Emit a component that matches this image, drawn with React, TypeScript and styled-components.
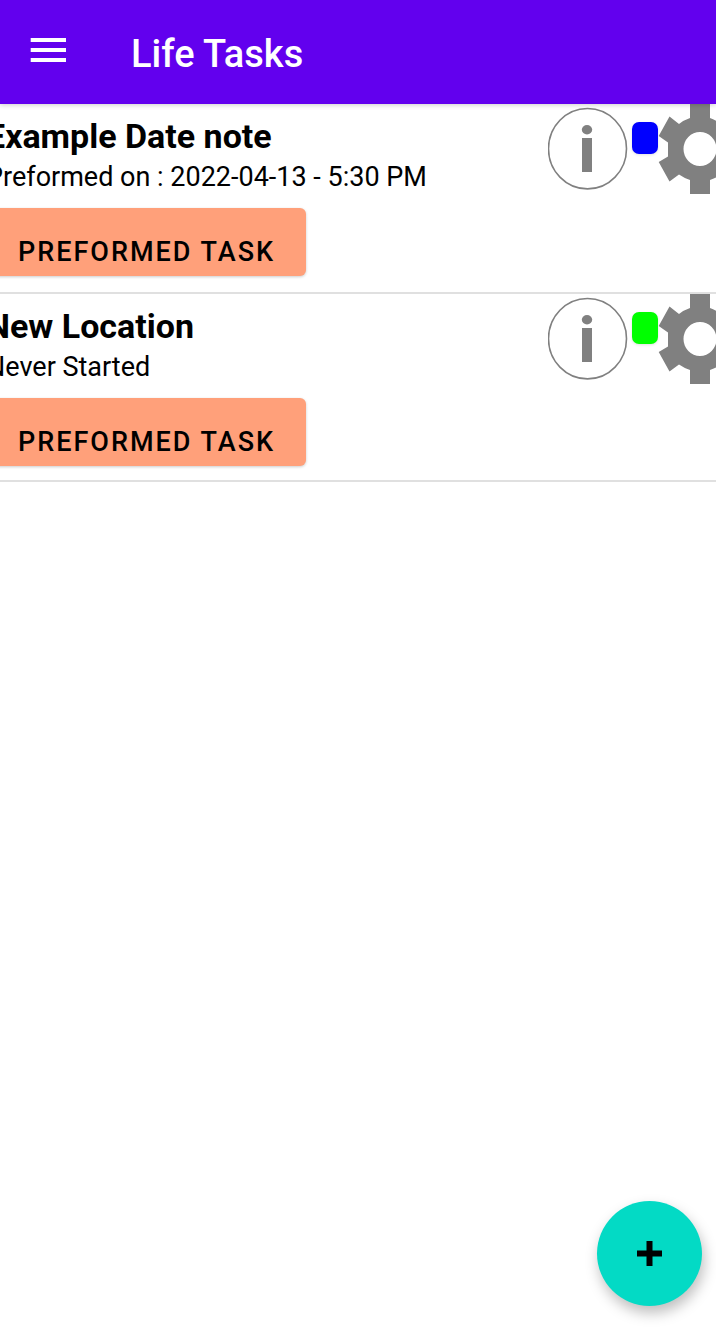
import React from "react";
import styled, { createGlobalStyle } from "styled-components";

const GlobalStyle = createGlobalStyle`
  *, *::before, *::after { box-sizing: border-box; }
  body {
    margin: 0;
    background: #ffffff;
    color: #000000;
    font-family: Roboto, "Liberation Sans", sans-serif;
  }
  button { font-family: inherit; color: inherit; border: 0; padding: 0; cursor: pointer; }
`;

const Screen = styled.div`
  min-height: 100vh;
  overflow: hidden;
`;

const AppBar = styled.header`
  position: relative;
  display: flex;
  align-items: center;
  gap: 64px;
  height: 104px;
  padding: 0 30px;
  background: #6200ee;
  color: #ffffff;
  box-shadow: 0 1px 5px rgba(0, 0, 0, 0.2);
`;

const MenuButton = styled.button`
  display: flex;
  width: 37px;
  height: 48px;
  align-items: center;
  padding-bottom: 4px;
  background: none;
`;

const AppTitle = styled.h1`
  margin: 0;
  padding-top: 4px;
  font-size: 38px;
  line-height: 44px;
  font-weight: 500;
`;

const TaskList = styled.ul`
  margin: 0;
  padding: 0;
  list-style: none;
`;

const TaskRow = styled.li`
  display: flex;
  justify-content: space-between;
  align-items: flex-start;
  padding-bottom: 16px;
  border-bottom: 2px solid #e0e0e0;

  &:last-child { padding-bottom: 14px; }
`;

const TaskBody = styled.div`
  flex: 1;
  min-width: 0;
  margin-left: -14px;
  padding-top: 12px;
`;

const TaskName = styled.h2`
  margin: 0;
  font-size: 34px;
  line-height: 40px;
  font-weight: 700;
`;

const TaskStatus = styled.p`
  margin: 0 0 10px;
  font-size: 27px;
  line-height: 42px;
`;

const TaskButton = styled.button`
  display: block;
  height: 68px;
  padding: 20px 31px 0 32px;
  border-radius: 6px;
  background: #ffa07a;
  font-size: 27px;
  line-height: 32px;
  font-weight: 500;
  letter-spacing: 2px;
  text-transform: uppercase;
  box-shadow: 0 1px 3px rgba(0, 0, 0, 0.2);
`;

const TaskTools = styled.div`
  display: flex;
  flex: none;
  align-items: flex-start;
  margin-right: -26px;
`;

const IconButton = styled.button`
  display: block;
  background: none;

  svg { display: block; }
`;

const ColorSwatch = styled.button<{ $color: string }>`
  width: 26px;
  height: 32px;
  margin: 18px 0 0 4px;
  border-radius: 7px;
  background: ${({ $color }) => $color};
  box-shadow: 0 1px 3px rgba(0, 0, 0, 0.12);
`;

const AddButton = styled.button`
  position: fixed;
  right: 14px;
  bottom: 26px;
  display: grid;
  place-items: center;
  width: 105px;
  height: 105px;
  border-radius: 50%;
  background: #03dac5;
  box-shadow: 2px 7px 14px rgba(0, 0, 0, 0.26);
`;

const MenuIcon = () => (
  <svg width="37" height="26" viewBox="0 0 37 26" fill="currentColor" aria-hidden="true">
    <path d="M.7 1h35.300v4H.7zM.7 11h35.300v4H.7zM.7 21h35.300v4H.7z" />
  </svg>
);

const InfoIcon = () => (
  <svg width="80" height="90" viewBox="0 0 80 90" aria-hidden="true">
    <ellipse cx="39.500" cy="44.700" rx="39" ry="40.200" fill="none" stroke="#808080" strokeWidth="1.600" />
    <ellipse cx="39" cy="25.700" rx="5.200" ry="4.700" fill="#808080" />
    <path d="M34 34h10v34H34z" fill="#808080" />
  </svg>
);

const GearIcon = () => (
  <svg width="84" height="90" viewBox="0 0 84 90" aria-hidden="true">
    <path
      fill="#808080"
      fillRule="evenodd"
      d="M32 0H52V14Q58 16 63 20L72.500 12.500L83 32L74 38.500Q75.500 45 74 52L83 58L72.500 77.500L63 70.500Q58 74 52 76V90H32V76Q26 74 21 70.500L11.500 77.500L.7 58L10 52.500V38.500L.7 32L11.500 12.500L21 20Q26 16 32 14ZM42 28A16.500 17 0 1 0 42 62A16.500 17 0 1 0 42 28Z"
    />
  </svg>
);

const PlusIcon = () => (
  <svg width="25" height="25" viewBox="0 0 25 25" aria-hidden="true">
    <path d="M9.500 0h6v9.500H25v6h-9.500V25h-6v-9.500H0v-6h9.500z" />
  </svg>
);

const tasks = [
  { name: "Example Date note", status: "Preformed on : 2022-04-13 - 5:30 PM", color: "#0000ff" },
  { name: "New Location", status: "Never Started", color: "#00ff00" },
];

export default function App() {
  return (
    <Screen>
      <GlobalStyle />
      <AppBar>
        <MenuButton type="button" aria-label="Open menu">
          <MenuIcon />
        </MenuButton>
        <AppTitle>Life Tasks</AppTitle>
      </AppBar>
      <main>
        <TaskList>
          {tasks.map((task) => (
            <TaskRow key={task.name}>
              <TaskBody>
                <TaskName>{task.name}</TaskName>
                <TaskStatus>{task.status}</TaskStatus>
                <TaskButton type="button">Preformed task</TaskButton>
              </TaskBody>
              <TaskTools>
                <IconButton type="button" aria-label="Task details">
                  <InfoIcon />
                </IconButton>
                <ColorSwatch type="button" aria-label="Task color" $color={task.color} />
                <IconButton type="button" aria-label="Task settings">
                  <GearIcon />
                </IconButton>
              </TaskTools>
            </TaskRow>
          ))}
        </TaskList>
      </main>
      <AddButton type="button" aria-label="Add task">
        <PlusIcon />
      </AddButton>
    </Screen>
  );
}
